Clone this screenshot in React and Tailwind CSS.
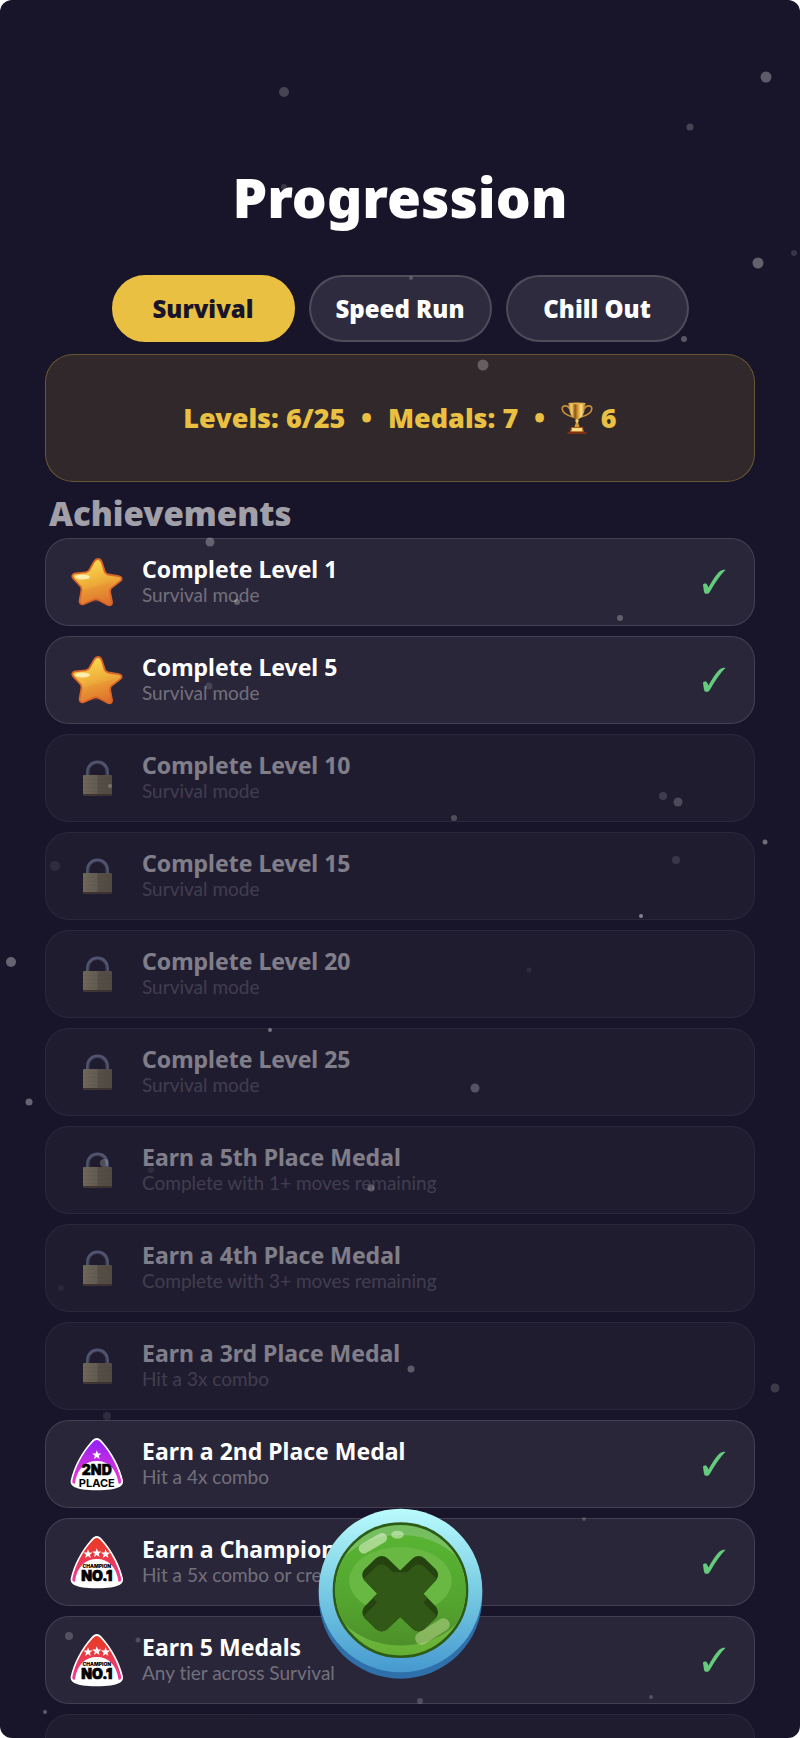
import React, { useState } from 'react';
import clsx from 'clsx';

const TABS = ['Survival', 'Speed Run', 'Chill Out'];

const ACHIEVEMENTS = [
    { title: 'Complete Level 1', description: 'Survival mode', icon: 'star', unlocked: true },
    { title: 'Complete Level 5', description: 'Survival mode', icon: 'star', unlocked: true },
    { title: 'Complete Level 10', description: 'Survival mode' },
    { title: 'Complete Level 15', description: 'Survival mode' },
    { title: 'Complete Level 20', description: 'Survival mode' },
    { title: 'Complete Level 25', description: 'Survival mode' },
    { title: 'Earn a 5th Place Medal', description: 'Complete with 1+ moves remaining' },
    { title: 'Earn a 4th Place Medal', description: 'Complete with 3+ moves remaining' },
    { title: 'Earn a 3rd Place Medal', description: 'Hit a 3x combo' },
    { title: 'Earn a 2nd Place Medal', description: 'Hit a 4x combo', icon: 'second', unlocked: true },
    { title: 'Earn a Champion Medal', description: 'Hit a 5x combo or create a chain', icon: 'champion', unlocked: true },
    { title: 'Earn 5 Medals', description: 'Any tier across Survival', icon: 'champion', unlocked: true },
];

// x, y, radius, opacity
const PARTICLES = [
    [284, 92, 5, 0.2], [766, 77, 5.5, 0.3], [690, 127, 3.5, 0.2], [758, 263, 5.5, 0.33], [794, 253, 3, 0.14],
    [684, 339, 3, 0.28], [483, 365, 5.5, 0.26], [411, 278, 2, 0.2], [284, 187, 3, 0.15], [210, 542, 4.5, 0.28],
    [237, 602, 3, 0.28], [209, 686, 3.5, 0.14], [620, 618, 3, 0.26], [110, 786, 2, 0.22], [55, 866, 5, 0.07],
    [11, 962, 5, 0.34], [270, 1030, 2, 0.38], [29, 1102, 3.5, 0.34], [104, 1163, 4, 0.22], [151, 1170, 3, 0.08],
    [371, 1188, 3.5, 0.26], [61, 1288, 3, 0.06], [107, 1416, 4, 0.1], [663, 796, 4, 0.14], [678, 802, 4.5, 0.2],
    [454, 818, 3, 0.22], [765, 842, 2.5, 0.38], [676, 860, 4, 0.12], [641, 916, 2, 0.45], [529, 970, 2.5, 0.07],
    [475, 1088, 4.5, 0.24], [411, 1369, 3.5, 0.28], [775, 1388, 4.5, 0.16], [69, 1636, 4, 0.2], [138, 1640, 2.5, 0.18],
    [45, 1712, 2, 0.3], [584, 1519, 2, 0.18], [651, 1697, 2, 0.2], [420, 1701, 3, 0.18],
];

const Particles = () => (
    <svg
        viewBox="0 0 800 1738"
        preserveAspectRatio="xMidYMin slice"
        className="absolute inset-0 w-full h-full pointer-events-none"
        aria-hidden="true"
    >
        {PARTICLES.map(([x, y, r, opacity]) => (
            <circle key={`${x}-${y}`} cx={x} cy={y} r={r} fill="#fff" opacity={opacity} />
        ))}
    </svg>
);

const StarIcon = () => (
    <svg viewBox="0 0 52 50" className="w-[52px] h-[50px]" aria-hidden="true">
        <defs>
            <linearGradient id="star-fill" x1="0.35" y1="0" x2="0.65" y2="1">
                <stop offset="0" stopColor="#fbdc50" />
                <stop offset="0.45" stopColor="#f0b23c" />
                <stop offset="1" stopColor="#de6f2c" />
            </linearGradient>
        </defs>
        <path
            d="M27 2 C29 2 30.2 3.6 30.8 5.4 L33.8 14.6 C34.4 16.4 35.4 17.2 37.2 17.5 L47.6 19.1 C51 19.8 51.6 22.4 49 24.4 L40.8 30.6 C39.2 31.9 38.8 33 39.1 34.8 L41 45 C41.4 48 39 49.2 36.4 47.8 L27.6 43 C25.8 42 24.4 42 22.8 42.8 L13.2 47 C10.4 48.2 8.2 46.6 8.6 43.6 L10.4 33.6 C10.7 31.6 10.4 30.4 9.2 29 L2.4 21.6 C0.4 19.2 1.3 16.7 4.4 16.4 L14.6 15.4 C16.6 15.2 17.6 14.4 18.5 12.8 L23.2 4.4 C24.2 2.8 25.4 2 27 2 Z"
            fill="url(#star-fill)"
            stroke="#d8642a"
            strokeWidth="1.8"
        />
        <path d="M9 34 L43 24 L40.2 31 L39.3 34 L40.6 45 L10.5 45.5 Z" fill="#dc6c28" opacity="0.15" />
        <ellipse cx="11.5" cy="20" rx="7.5" ry="2.6" fill="#fff6c0" opacity="0.85" />
    </svg>
);

const LockIcon = () => (
    <svg viewBox="0 0 29 36" className="w-[29px] h-[36px]" aria-hidden="true">
        <defs>
            <linearGradient id="lock-body" x1="0" y1="0" x2="1" y2="0">
                <stop offset="0" stopColor="#d8d096" />
                <stop offset="0.3" stopColor="#c4ba88" />
                <stop offset="0.49" stopColor="#c0b484" />
                <stop offset="0.51" stopColor="#a0946a" />
                <stop offset="1" stopColor="#988c62" />
            </linearGradient>
        </defs>
        <path d="M4.7 16 V12.5 C4.7 6 9 2.2 14.5 2.2 C20 2.2 24.3 6 24.3 12.5 V16" fill="none" stroke="#94a2c8" strokeWidth="3.2" />
        <path d="M5.8 15 V12.5 C5.8 7 9.8 3.6 14.5 3.6 C19 3.6 23.2 7 23.2 12.5 V15" fill="none" stroke="#66646c" strokeWidth="0.9" />
        <rect x="0" y="15" width="29" height="20.5" rx="1" fill="url(#lock-body)" />
        <path d="M0 19.5 H29 M0 23.5 H29 M0 27.5 H29 M0 31.5 H29" stroke="#6f6247" strokeWidth="0.6" opacity="0.15" />
        <rect x="0" y="34" width="29" height="1.5" fill="#6a5636" />
    </svg>
);

const SmallStar = ({ x, y }) => (
    <path
        transform={`translate(${x} ${y})`}
        d="M0 -4.8 L1.2 -1.5 L4.6 -1.4 L1.9 0.7 L2.8 4 L0 2.1 L-2.8 4 L-1.9 0.7 L-4.6 -1.4 L-1.2 -1.5 Z"
        fill="#fff"
    />
);

const MedalIcon = ({ type }) => {
    const isChampion = type === 'champion';
    const fillId = `medal-${type}`;
    return (
        <svg viewBox="0 0 54 54" className="w-[54px] h-[54px]" role="img" aria-label={isChampion ? 'Champion medal' : '2nd place medal'}>
            <defs>
                <linearGradient id={fillId} x1="0" y1="0" x2="0" y2="1">
                    <stop offset="0.1" stopColor={isChampion ? '#ea3a2c' : '#9a22f4'} />
                    <stop offset="0.4" stopColor={isChampion ? '#ea3a40' : '#b82ae6'} />
                    <stop offset="0.9" stopColor={isChampion ? '#ee3c92' : '#e23ad0'} />
                </linearGradient>
            </defs>
            <path
                d="M26.8 1 C29 1 30.6 2.4 32.4 4.4 C42 15 50 30 53 43.5 C53.8 48.5 50 53.2 26.8 53.2 C3.8 53.2 0 48.5 0.7 43.5 C3.5 30 11.5 15 21.2 4.4 C23 2.4 24.6 1 26.8 1 Z"
                fill="#fff"
            />
            <path
                d="M26.8 3 C28.4 3 29.8 4.2 31.2 5.8 C40.6 16 48.2 30.5 51.2 43.5 C51.8 46.8 49.2 47.2 48.5 46.5 C46.5 32 38.5 24 26.8 24 C15 24 7 32 5 46.5 C4.4 47.2 1.8 46.8 2.4 43.5 C5.2 30.5 12.8 16 22.4 5.8 C23.8 4.2 25.2 3 26.8 3 Z"
                fill={`url(#${fillId})`}
            />
            {isChampion ? (
                <>
                    <SmallStar x={18} y={19} />
                    <SmallStar x={26.8} y={18} />
                    <SmallStar x={35.6} y={19} />
                    <text x="26.8" y="33" textAnchor="middle" className="font-['Inter',sans-serif] font-black text-[5px]" fill="#000">CHAMPION</text>
                    <text x="26.8" y="46" textAnchor="middle" className="font-['Inter',sans-serif] font-black text-[14px]" fill="#000" stroke="#000" strokeWidth="0.7">NO.1</text>
                </>
            ) : (
                <>
                    <SmallStar x={26.8} y={18} />
                    <text x="26.8" y="38" textAnchor="middle" className="font-['Inter',sans-serif] font-black text-[14px]" fill="#000" stroke="#000" strokeWidth="0.5">2ND</text>
                    <text x="26.8" y="49.5" textAnchor="middle" className="font-['Inter',sans-serif] font-bold text-[11px]" fill="#000">PLACE</text>
                </>
            )}
        </svg>
    );
};

const TrophyIcon = () => (
    <svg viewBox="0 0 32 32" className="w-8 h-8" role="img" aria-label="Trophies">
        <defs>
            <linearGradient id="trophy-cup" x1="0" y1="0" x2="1" y2="0">
                <stop offset="0" stopColor="#c98a2c" />
                <stop offset="0.2" stopColor="#f5d070" />
                <stop offset="0.38" stopColor="#8a5412" />
                <stop offset="0.55" stopColor="#d99a30" />
                <stop offset="0.75" stopColor="#fbe088" />
                <stop offset="1" stopColor="#a96a1c" />
            </linearGradient>
        </defs>
        <path d="M8.5 6.5 C6.5 2.8 1 3 1.2 6.8 C1.4 10.5 6 13.4 12 15" fill="none" stroke="#c89038" strokeWidth="1.6" />
        <path d="M23.5 6.5 C25.5 2.8 31 3 30.8 6.8 C30.6 10.5 26 13.4 20 15" fill="none" stroke="#c89038" strokeWidth="1.6" />
        <path d="M7.5 1 C7.7 9 9.6 14.5 14.3 17.2 H17.7 C22.4 14.5 24.3 9 24.5 1 Z" fill="url(#trophy-cup)" />
        <ellipse cx="16" cy="1.4" rx="8.6" ry="1" fill="#e3b04e" />
        <path d="M14.6 17 H17.4 L16.9 20 L18.6 25 H13.4 L15.1 20 Z" fill="#d39a38" />
        <circle cx="16" cy="19" r="1.7" fill="#f3cd6c" />
        <path d="M10 25 H22 L23 30 H9 Z" fill="#a8561c" />
        <path d="M11 26 H21 L21.5 29.3 H10.5 Z" fill="#f7dc84" />
        <rect x="6.5" y="30" width="19" height="2" rx="0.5" fill="#7c3210" />
    </svg>
);

const CheckIcon = () => (
    <svg viewBox="0 0 24 26" className="w-[24px] h-[26px] shrink-0" role="img" aria-label="Unlocked">
        <path
            d="M1 16 C1.4 14.4 4.4 14 5.2 15.8 L6.6 18.4 C10 12 14 5.5 17.6 2.4 C19.2 1.2 21.4 0.6 23.6 0.8 C18 6.5 13 14 8.4 22 C7.2 24.2 6.4 24.8 4.8 24.8 C2.8 24.8 2.3 24 1.9 22 Z"
            fill="#64cc7c"
        />
    </svg>
);

const CROSS_PATH =
    'M305 240 L343 203 Q360 189 378 203 L412 236 Q426 252 412 270 L375 310 L412 348 Q426 366 412 383 L378 416 Q360 430 343 416 L305 380 L267 416 Q250 430 232 416 L198 383 Q184 366 198 348 L236 310 L198 270 Q184 252 198 236 L232 203 Q250 189 267 203 Z';

const CloseButton = () => (
    <button type="button" aria-label="Close" className="pointer-events-auto cursor-pointer">
        <svg viewBox="58 52 496 514" className="block w-[165px] h-[171px]" aria-hidden="true">
            <defs>
                <linearGradient id="ring" x1="0" y1="0" x2="0" y2="1">
                    <stop offset="0" stopColor="#bafbfd" />
                    <stop offset="0.5" stopColor="#78cce4" />
                    <stop offset="1" stopColor="#4699cf" />
                </linearGradient>
                <linearGradient id="rim" x1="0" y1="0" x2="0" y2="1">
                    <stop offset="0" stopColor="#74bd62" />
                    <stop offset="0.5" stopColor="#7bc957" />
                    <stop offset="1" stopColor="#65ae32" />
                </linearGradient>
                <linearGradient id="face" x1="0" y1="0" x2="0" y2="1">
                    <stop offset="0" stopColor="#58b433" />
                    <stop offset="0.6" stopColor="#53a52f" />
                    <stop offset="1" stopColor="#4e8f2a" />
                </linearGradient>
                <clipPath id="face-clip">
                    <circle cx="306" cy="299" r="196" />
                </clipPath>
                <clipPath id="cross-clip">
                    <path d={CROSS_PATH} />
                </clipPath>
            </defs>
            <circle cx="306" cy="319" r="246" fill="#2f70aa" />
            <circle cx="306" cy="300" r="246" fill="url(#ring)" />
            <circle cx="306" cy="299" r="200" fill="url(#rim)" stroke="#2d5c16" strokeWidth="8" />
            <g clipPath="url(#face-clip)">
                <ellipse cx="306" cy="299" rx="212" ry="166" fill="url(#face)" />
                <ellipse cx="306" cy="270" rx="154" ry="101" fill="#69b843" />
                <rect x="-47" y="-15" width="94" height="30" rx="15" transform="translate(223 158) rotate(-30)" fill="#dcf2cc" opacity="0.6" />
                <ellipse cx="297" cy="132" rx="19" ry="12" fill="#dcf2cc" opacity="0.55" />
                <rect x="-58" y="-19" width="116" height="38" rx="19" transform="translate(402 423) rotate(-32)" fill="#cfe0a0" opacity="0.45" />
            </g>
            <path d={CROSS_PATH} fill="#25430e" />
            <g clipPath="url(#cross-clip)">
                <path d={CROSS_PATH} transform="translate(0 26)" fill="#325818" />
                <rect x="236" y="245" width="139" height="130" fill="#325818" />
            </g>
        </svg>
    </button>
);

const AchievementIcon = ({ icon }) => {
    if (icon === 'star') return <StarIcon />;
    if (icon) return <MedalIcon type={icon} />;
    return <LockIcon />;
};

const AchievementRow = ({ title, description, icon, unlocked }) => (
    <li
        className={clsx(
            'flex items-center shrink-0 h-[88px] gap-[18px] pl-6 pr-7 rounded-3xl bg-white/8 border border-white/12',
            !unlocked && 'opacity-45'
        )}
    >
        <div className="w-[54px] shrink-0 flex justify-center">
            <AchievementIcon icon={icon} />
        </div>
        <div className="flex-1 min-w-0 pb-0.5">
            <h3 className="text-[23px] leading-7 font-bold">{title}</h3>
            <p className="font-['Lato',sans-serif] text-[19px] leading-6 text-white/35 [font-variant-ligatures:none]">{description}</p>
        </div>
        {unlocked && <CheckIcon />}
    </li>
);

const App = () => {
    const [activeTab, setActiveTab] = useState('Survival');

    return (
        <div className="h-screen bg-white">
            <main className="relative h-full overflow-hidden rounded-xl bg-[#181429] text-white font-['Noto_Sans',sans-serif]">
                <div className="flex flex-col px-[45px] pt-[167px]">
                    <h1 className="text-center text-[55px] leading-[60px] font-black">Progression</h1>

                    <div role="tablist" className="mt-12 flex justify-center gap-[14px]">
                        {TABS.map((tab) => (
                            <button
                                key={tab}
                                type="button"
                                role="tab"
                                aria-selected={activeTab === tab}
                                onClick={() => setActiveTab(tab)}
                                className={clsx(
                                    'w-[183px] h-[67px] rounded-full border-2 text-[24px] font-black cursor-pointer',
                                    activeTab === tab
                                        ? 'bg-[#eac043] border-[#eac043] text-[#181429]'
                                        : 'bg-white/10 border-white/15 text-white'
                                )}
                            >
                                {tab}
                            </button>
                        ))}
                    </div>

                    <section className="mt-3 h-32 flex items-center justify-center gap-4 rounded-[28px] border border-[#eac043]/30 bg-[#eac043]/12 text-[27px] font-black text-[#eac043]">
                        <span>Levels: 6/25</span>
                        <span>•</span>
                        <span>Medals: 7</span>
                        <span>•</span>
                        <span className="flex items-center gap-2">
                            <TrophyIcon /> 6
                        </span>
                    </section>

                    <h2 className="pt-3 pb-1 pl-1 text-[33px] leading-10 font-black text-white/60">Achievements</h2>

                    <ul className="flex flex-col gap-[10px]">
                        {ACHIEVEMENTS.map((achievement) => (
                            <AchievementRow key={achievement.title} {...achievement} />
                        ))}
                        {/* Empty slot below the last achievement */}
                        <li className="h-[88px] shrink-0 rounded-3xl bg-white/8 border border-white/12 opacity-45" aria-hidden="true" />
                    </ul>
                </div>

                <Particles />

                {/* Floating close button */}
                <div className="absolute inset-x-0 bottom-[59px] flex justify-center pointer-events-none">
                    <CloseButton />
                </div>
            </main>
        </div>
    );
};

export default App;
